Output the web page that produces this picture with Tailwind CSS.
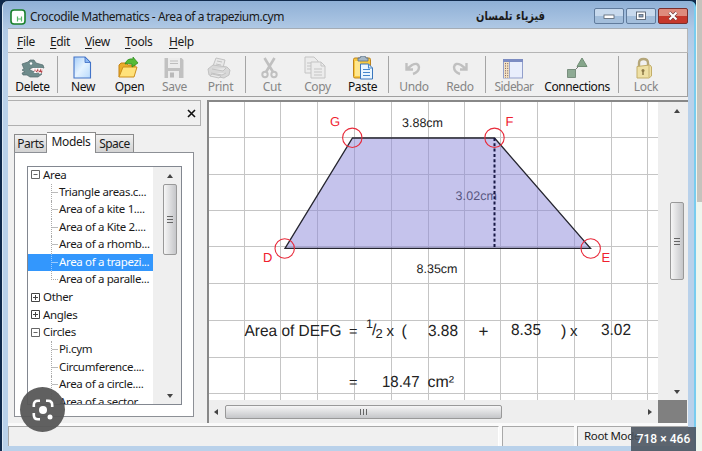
<!DOCTYPE html>
<html lang="en">
<head>
<meta charset="utf-8">
<title>Crocodile Mathematics</title>
<script src="https://cdn.jsdelivr.net/npm/@tailwindcss/browser@4"></script>
</head>
<body class="w-[702px] h-[451px] overflow-hidden bg-[#102a4c] font-['Noto_Sans','Open_Sans',sans-serif] text-[12px] text-[#1a1a1a] tracking-[-0.35px] whitespace-nowrap">
<div class="relative flex w-[702px] h-[451px]">
  <!-- window frame -->
  <div class="flex flex-col ml-[2px] w-[694px] mt-px rounded-t-[6px] bg-[linear-gradient(to_bottom,#8fb0d6_0px,#b0c9e5_28px,#b9d1ea_60px,#b9d1ea_100%)] border-l border-[#dce9f6] border-r-2 border-r-[#78ccef] pl-[5px] pr-[6px] h-[451px]">
    <!-- title bar -->
    <header class="flex h-[27px] shrink-0 items-center pl-[2px] pt-[4px]">
      <svg width="16" height="16" viewBox="0 0 16 16" class="shrink-0"><rect x="1" y="1" width="14" height="14" rx="3" fill="#fff" stroke="#19802b" stroke-width="1.6"/><path d="M7.500 12.500V7.500M11.500 12.500V7.500M7.500 10h4" fill="none" stroke="#58b868" stroke-width="1.200"/></svg>
      <h1 class="ml-[4px] w-[448px] tracking-[-0.47px]">Crocodile Mathematics - Area of a trapezium.cym</h1>
      <div class="w-[68px] -mt-[1px] font-['DejaVu_Sans',sans-serif] font-bold text-[12px] leading-[18px] tracking-normal" dir="rtl"><span class="inline-block origin-right scale-x-[0.82]">فيزياء تلمسان</span></div>
      <div class="flex ml-[49px] gap-[2px] -mt-px">
        <div class="flex w-[30px] h-[16px] items-center justify-center rounded-[2px] border border-[#607b9c] bg-linear-to-b from-[#c7d9ed] from-50% to-[#a3bedb] to-50%"><svg width="12" height="8"><rect x="1" y="3" width="10" height="3.500" fill="#fff" stroke="#55606e" stroke-width=".8"/></svg></div>
        <div class="flex w-[30px] h-[16px] items-center justify-center rounded-[2px] border border-[#607b9c] bg-linear-to-b from-[#c7d9ed] from-50% to-[#a3bedb] to-50%"><svg width="12" height="10"><rect x="1.500" y="1" width="9" height="7.500" fill="#fff" stroke="#55606e" stroke-width=".9"/><rect x="4" y="3.500" width="4" height="2.500" fill="#8ba3bf" stroke="#55606e" stroke-width=".8"/></svg></div>
        <div class="flex w-[30px] h-[16px] items-center justify-center rounded-[2px] border border-[#7a2e2c] bg-linear-to-b from-[#df8a7c] from-50% to-[#c6372b] to-50%"><svg width="12" height="10"><path d="M2.500 1.500l7 7M9.500 1.500l-7 7" stroke="#6c3a3a" stroke-width="3.400"/><path d="M2.500 1.500l7 7M9.500 1.500l-7 7" stroke="#fff" stroke-width="2.200"/></svg></div>
      </div>
    </header>
    <!-- client area -->
    <div class="flex flex-col w-[680px] h-[418px] bg-[#f0f0f0] border-t border-[#a4acb5]">
      <nav class="flex h-[24px] shrink-0 items-center border-r border-b border-[#b5b5b5] pl-[9px] pt-[2px]">
        <span class="w-[33px]"><u class="underline-offset-2">F</u>ile</span>
        <span class="w-[35px]"><u class="underline-offset-2">E</u>dit</span>
        <span class="w-[40px]"><u class="underline-offset-2">V</u>iew</span>
        <span class="w-[44px]"><u class="underline-offset-2">T</u>ools</span>
        <span><u class="underline-offset-2">H</u>elp</span>
      </nav>
      <!-- toolbar -->
      <div class="flex h-[44px] shrink-0 border-r border-b border-[#a0a0a0] text-[#858585]">
        <div class="flex flex-col items-center w-[49px] pt-[4px] text-[#111]"><svg width="24" height="22" viewBox="0 0 24 22" class="shrink-0"><path d="M1 7l6-2 2-2 4 0 2 3 7 2 1 3-7 1-5-1-3 1 3 2 8 2 2 1-4 3-8 0-3-2-4 0-1-2 3-1-3-2 2-1z" fill="#6f8c8c" stroke="#50696b" stroke-width=".7"/><path d="M11 11l11 0-1 5-7-1z" fill="#b9474c"/><path d="M11 11l2 3 1-3 1 3 2-3 1 3 2-3 1 3 1-3M13 16l1-2 2 2 1-2 2 3 1-2" fill="#fff" stroke="#fff" stroke-width=".5"/><circle cx="10" cy="6.500" r="1.200" fill="#fff"/></svg><span class="leading-[14px] mt-px">Delete</span></div>
        <i class="w-px my-[3px] bg-[#a5a5a5]"></i>
        <div class="flex flex-col items-center w-[50px] pt-[4px] text-[#111]"><svg width="20" height="24" viewBox="0 0 20 24" class="shrink-0 -mt-px"><defs><linearGradient id="pg" x2="1" y2="1"><stop stop-color="#a6cdf9"/><stop offset=".5" stop-color="#e5f3ff"/><stop offset="1" stop-color="#b8dafc"/></linearGradient></defs><path d="M1 1h11l5.500 5.500V22H1z" fill="url(#pg)" stroke="#4374c8" stroke-width="1.100"/><path d="M12 1v5.500h5.500z" fill="#8bb8f4" stroke="#3c6cc4" stroke-width=".8"/></svg><span class="leading-[14px]">New</span></div>
        <div class="flex flex-col items-center w-[43px] pt-[4px] text-[#111]"><svg width="24" height="22" viewBox="0 0 24 22" class="shrink-0 -ml-[4px]"><path d="M3 20V8l2-2h5l2 2h7v3" fill="#e9ad2a" stroke="#c58112"/><path d="M3 20l4-10h14l-3 10z" fill="#ffe27a" stroke="#cc8e1b"/><path d="M9 7Q11 1 17 2V0l5 6-6 4V7q-4-1-7 0z" fill="#55bb37" stroke="#258619" stroke-width=".7"/></svg><span class="leading-[14px] mt-px">Open</span></div>
        <div class="flex flex-col items-center w-[47px] pt-[4px]"><svg width="22" height="22" viewBox="0 0 22 22" class="shrink-0 -ml-[2px]"><path d="M1.500 1h17l2 2v18h-19z" fill="#c1c1c1"/><path d="M5 1h12v10H5zM5 14h11v7H5z" fill="#ececec"/><path d="M7 4h8M7 6.500h8" stroke="#bdbdbd"/><path d="M7 15.500h4v5H7z" fill="#bababa"/></svg><span class="leading-[14px] mt-px">Save</span></div>
        <div class="flex flex-col items-center w-[45px] pt-[4px]"><svg width="24" height="22" viewBox="0 0 24 22" class="shrink-0 -ml-[3px]"><g fill="#e8e8e8" stroke="#c2c2c2"><path d="M6 9l3-8 9 2-2 8z"/><path d="M1 12l5-4 14 2 3 3-1 5-5 3-15-3z" fill="#d8d8d8"/><path d="M5 12l11 2 3-3M4 16l11 2 4-2M10 4l5 1M9 7l5 1"/><path d="M5 17l9 2-2 2-9-2z"/></g></svg><span class="leading-[14px] mt-px">Print</span></div>
        <i class="ml-[2px] w-px my-[3px] bg-[#a5a5a5]"></i>
        <div class="flex flex-col items-center w-[52px] pt-[4px]"><svg width="20" height="22" viewBox="0 0 20 22" class="shrink-0 -ml-[4px]"><g fill="none" stroke="#c0c0c0" stroke-width="2.600"><path d="M4.500 1l8.500 14M14.500 1L6 15"/><circle cx="5" cy="17.500" r="2.700" stroke-width="2"/><circle cx="14" cy="17.500" r="2.700" stroke-width="2"/></g></svg><span class="leading-[14px] mt-px">Cut</span></div>
        <div class="flex flex-col items-center w-[39px] pt-[4px]"><svg width="24" height="24" viewBox="0 0 24 24" class="shrink-0 -ml-[5px] -mt-px"><g fill="#ececec" stroke="#c4c4c4"><path d="M2 1h9l4 4v12H2z"/><path d="M4 7h7M4 10h7M4 13h7"/><path d="M8 6h10l4 4v12H8z"/><path d="M18 6v4h4M11 13h8M11 16h8M11 19h8" fill="none"/></g></svg><span class="leading-[14px]">Copy</span></div>
        <div class="flex flex-col items-center w-[51px] pt-[4px] text-[#111]"><svg width="22" height="24" viewBox="0 0 22 24" class="shrink-0 -mt-px"><rect x="1.500" y="2" width="17" height="20" rx="1.500" fill="#f8c83f" stroke="#bd831c"/><path d="M3 5h5v15H3z" fill="#ffe68d"/><path d="M6 4V2h2l1-2h4l1 2h2v3H6z" fill="#a7b8c6" stroke="#566d83" stroke-width=".8"/><path d="M8.500 8h8l4 4v11h-12z" fill="#eaf6ff" stroke="#3976bd"/><path d="M16.500 8v4h4M11 13.500h7M11 16.500h7M11 19.500h7" fill="none" stroke="#4587cc" stroke-width="1.100"/></svg><span class="leading-[14px]">Paste</span></div>
        <i class="w-px my-[3px] bg-[#a5a5a5]"></i>
        <div class="flex flex-col items-center w-[50px] pt-[4px]"><svg width="20" height="22" viewBox="0 0 20 22" class="shrink-0 -ml-[3px]"><path d="M3.500 6v6.500H10M4.500 11.500L9 8q6-3 7 2 0 5-6 7" fill="none" stroke="#c0c0c0" stroke-width="2.400"/></svg><span class="leading-[14px] mt-px">Undo</span></div>
        <div class="flex flex-col items-center w-[42px] pt-[4px]"><svg width="20" height="22" viewBox="0 0 20 22" class="shrink-0"><path d="M16.500 6v6.500H10M15.500 11.500L11 8Q5 5 4 10q0 5 6 7" fill="none" stroke="#c0c0c0" stroke-width="2.400"/></svg><span class="leading-[14px] mt-px">Redo</span></div>
        <i class="ml-[4px] w-px my-[3px] bg-[#a5a5a5]"></i>
        <div class="flex flex-col items-center w-[56px] pt-[4px] tracking-[-0.55px]"><svg width="22" height="22" viewBox="0 0 22 22" class="shrink-0 -ml-[2px]"><rect x="1.500" y="2.500" width="19" height="18.500" fill="#e9eefc" stroke="#929fcb"/><path d="M1 2h20v3H1z" fill="#7c8cc2"/><path d="M2 5h5v16H2z" fill="#f3e3c4"/><path d="M3.500 6v15M5.700 6v15" stroke="#8d6d67" stroke-dasharray="1.200 1.200"/><path d="M7.500 5v16" stroke="#9aa6ce"/></svg><span class="leading-[14px] mt-px">Sidebar</span></div>
        <div class="flex flex-col items-center w-[70px] pt-[4px] text-[#111] tracking-[-0.42px]"><svg width="24" height="22" viewBox="0 0 24 22" class="shrink-0"><path d="M6 17L17 6" stroke="#777"/><path d="M2.500 12.500h8v8h-8z" fill="#8eaa94" stroke="#798f7e"/><path d="M17 1l5 8.500H12z" fill="#86a68b" stroke="#708d75"/></svg><span class="leading-[14px] mt-px">Connections</span></div>
        <i class="ml-[6px] w-px my-[3px] bg-[#a5a5a5]"></i>
        <div class="flex flex-col items-center w-[54px] pt-[4px]"><svg width="18" height="22" viewBox="0 0 18 22" class="shrink-0 -ml-[4px]"><path d="M4 10V6q0-4 4.500-4T13 6v4" fill="none" stroke="#b4a679" stroke-width="2.400"/><path d="M2 9.500l13-1.500 1.500 2v9L14 21H2z" fill="#eee0a5" stroke="#c3ae69"/><path d="M14 9v11" stroke="#c9b575"/><circle cx="8" cy="13.500" r="1.500" fill="#8d7a48"/><path d="M8 14v4" stroke="#8d7a48" stroke-width="1.500"/></svg><span class="leading-[14px] mt-px">Lock</span></div>
      </div>
      <!-- workspace -->
      <main class="flex h-[326px] shrink-0 pt-[3px]">
        <aside class="w-[199px] h-[323px] shrink-0">
          <div class="flex w-[193px] h-[26px] items-center justify-end border-t border-r border-b border-[#b0b0b0] pr-[4px]"><svg width="9" height="9"><path d="M1 1l7 7M8 1L1 8" stroke="#111" stroke-width="1.600"/></svg></div>
          <div class="flex items-end h-[26px] pl-[6px]">
            <div class="w-[33px] h-[18px] border border-b-0 border-[#8b8b8b] bg-linear-to-b from-[#f0f0f0] to-[#d3d3d3] text-center leading-[17px] tracking-[-0.5px]">Parts</div>
            <div class="relative z-10 w-[49px] h-[21px] -mb-px border border-b-0 border-l-0 border-[#8b8b8b] bg-white text-center leading-[17px]">Models</div>
            <div class="w-[38px] h-[18px] border border-b-0 border-l-0 border-[#8b8b8b] bg-linear-to-b from-[#f0f0f0] to-[#d3d3d3] text-center leading-[17px] tracking-[-0.5px]">Space</div>
          </div>
          <div class="ml-[6px] w-[180px] h-[265px] border border-[#8d9096] bg-white pt-[13px] pl-[12px]">
            <div class="flex w-[155px] h-[239px] border border-[#828790]">
              <div class="w-[125px] h-[237px] overflow-hidden tracking-[-0.35px]">
                <ul class="leading-[16.5px] text-[11.5px] -mt-px">
                  <li class="flex h-[17.500px] items-center pl-[3px] gap-[3px]"><svg width="9" height="9"><path d="M.5.5h8v8h-8zM2.500 4.500h4" fill="#fff" stroke="#666"/></svg>Area</li>
                  <li class="flex h-[17.500px] pl-[23px]"><i class="w-[7px] mr-px border-l border-dotted border-[#aaa] bg-[linear-gradient(#bbb,#bbb)] bg-[length:100%_1px] bg-center bg-no-repeat"></i>Triangle areas.c...</li>
                  <li class="flex h-[17.500px] pl-[23px]"><i class="w-[7px] mr-px border-l border-dotted border-[#aaa] bg-[linear-gradient(#bbb,#bbb)] bg-[length:100%_1px] bg-center bg-no-repeat"></i>Area of a kite 1....</li>
                  <li class="flex h-[17.500px] pl-[23px]"><i class="w-[7px] mr-px border-l border-dotted border-[#aaa] bg-[linear-gradient(#bbb,#bbb)] bg-[length:100%_1px] bg-center bg-no-repeat"></i>Area of a Kite 2....</li>
                  <li class="flex h-[17.500px] pl-[23px]"><i class="w-[7px] mr-px border-l border-dotted border-[#aaa] bg-[linear-gradient(#bbb,#bbb)] bg-[length:100%_1px] bg-center bg-no-repeat"></i>Area of a rhomb...</li>
                  <li class="flex h-[17.500px] pl-[23px] bg-[#3397fd] text-white"><i class="w-[7px] mr-px border-l border-dotted border-[#9bcbff] bg-[linear-gradient(#9bcbff,#9bcbff)] bg-[length:100%_1px] bg-center bg-no-repeat"></i>Area of a trapezi...</li>
                  <li class="flex h-[17.500px] pl-[23px]"><i class="w-[7px] h-[9px] mr-px border-l border-b border-dotted border-[#aaa]"></i>Area of a paralle...</li>
                  <li class="flex h-[17.500px] items-center pl-[3px] gap-[3px]"><svg width="9" height="9"><path d="M.5.5h8v8h-8zM2 4.500h5M4.500 2v5" fill="#fff" stroke="#444"/></svg>Other</li>
                  <li class="flex h-[17.500px] items-center pl-[3px] gap-[3px]"><svg width="9" height="9"><path d="M.5.5h8v8h-8zM2 4.500h5M4.500 2v5" fill="#fff" stroke="#444"/></svg>Angles</li>
                  <li class="flex h-[17.500px] items-center pl-[3px] gap-[3px]"><svg width="9" height="9"><path d="M.5.5h8v8h-8zM2.500 4.500h4" fill="#fff" stroke="#666"/></svg>Circles</li>
                  <li class="flex h-[17.500px] pl-[23px]"><i class="w-[7px] mr-px border-l border-dotted border-[#aaa] bg-[linear-gradient(#bbb,#bbb)] bg-[length:100%_1px] bg-center bg-no-repeat"></i>Pi.cym</li>
                  <li class="flex h-[17.500px] pl-[23px]"><i class="w-[7px] mr-px border-l border-dotted border-[#aaa] bg-[linear-gradient(#bbb,#bbb)] bg-[length:100%_1px] bg-center bg-no-repeat"></i>Circumference....</li>
                  <li class="flex h-[17.500px] pl-[23px]"><i class="w-[7px] mr-px border-l border-dotted border-[#aaa] bg-[linear-gradient(#bbb,#bbb)] bg-[length:100%_1px] bg-center bg-no-repeat"></i>Area of a circle....</li>
                  <li class="flex h-[17.500px] pl-[23px]"><i class="w-[7px] mr-px border-l border-dotted border-[#aaa]"></i>Area of a sector</li>
                </ul>
              </div>
              <div class="flex flex-col items-center w-[28px] bg-[#efefef] pl-[6px] pt-[7px]">
                <svg width="6" height="4"><path d="M0 4l3-4 3 4z" fill="#444"/></svg>
                <div class="mt-[6px] flex flex-col w-[14px] h-[71px] items-center justify-center gap-px rounded-[2px] border border-[#999] bg-linear-to-r from-[#f6f6f6] to-[#c5c6c9]"><i class="w-[6px] h-px bg-[#666]"></i><i class="mt-px w-[6px] h-px bg-[#666]"></i><i class="mt-px w-[6px] h-px bg-[#666]"></i></div>
                <svg width="6" height="4" class="mt-auto mb-[6px]"><path d="M0 0l3 4 3-4z" fill="#444"/></svg>
              </div>
            </div>
          </div>
        </aside>
        <section class="flex flex-col w-[481px] h-[323px] border-l-2 border-[#888]">
          <div class="flex h-[300px] border-t-2 border-[#888]">
            <svg width="449" height="298" viewBox="209 102 449 298" class="shrink-0 bg-white" font-family="'Liberation Sans',Arial,sans-serif" letter-spacing="0" fill="#222" text-rendering="geometricPrecision">
              <path d="M244.500 102v298M280.500 102v298M317.500 102v298M354.500 102v298M391.500 102v298M428.500 102v298M464.500 102v298M500.500 102v298M537.500 102v298M574.500 102v298M611.500 102v298M647.500 102v298M209 137.500h449M209 174.500h449M209 210.500h449M209 246.500h449M209 283.500h449M209 320.500h449M209 357.500h449M209 393.500h449" stroke="#c5c5c5" fill="none"/>
              <text x="455.500" y="200" font-size="12.500" textLength="41.500">3.02cm</text>
              <path d="M352.500 138H494.500L590.500 248.300H285z" fill="#8c87d9" fill-opacity=".5" stroke="#25252f" stroke-width="1.300"/>
              <path d="M494.500 138v110" stroke="#171744" stroke-width="2" stroke-dasharray="3 2.300"/>
              <g fill="none" stroke="#e82a3a" stroke-width="1.100"><circle cx="352.300" cy="137.800" r="9.700"/><circle cx="494.500" cy="137.800" r="9.700"/><circle cx="284.700" cy="248.500" r="9.700"/><circle cx="590.700" cy="248.500" r="9.700"/></g>
              <g fill="#f0202e" font-size="13"><text x="330" y="126">G</text><text x="505.500" y="126">F</text><text x="263" y="262">D</text><text x="601.500" y="262">E</text></g>
              <g font-size="12.500"><text x="402" y="126.500" textLength="41">3.88cm</text><text x="416.500" y="273" textLength="41">8.35cm</text></g>
              <g font-size="16">
                <text x="244.500" y="336" textLength="97" lengthAdjust="spacingAndGlyphs">Area of DEFG</text><text x="349" y="336" font-size="14.500">=</text>
                <text x="366" y="328" font-size="12.500">1</text><text x="372" y="335">/</text><text x="375.500" y="337.500" font-size="13">2</text><text x="386.500" y="335.500" font-size="15">x</text><text x="401.500" y="336">(</text>
                <text x="428" y="335.500" textLength="30" lengthAdjust="spacingAndGlyphs">3.88</text><text x="478.500" y="337" font-size="17">+</text><text x="511" y="334.500" textLength="30" lengthAdjust="spacingAndGlyphs">8.35</text><text x="561" y="336">)</text><text x="570" y="335.500" font-size="15">x</text><text x="601" y="334.500" textLength="30" lengthAdjust="spacingAndGlyphs">3.02</text>
                <text x="349" y="387" font-size="14.500">=</text><text x="382" y="386.500" textLength="37.500" lengthAdjust="spacingAndGlyphs">18.47</text><text x="427.500" y="386.500" textLength="26.500" lengthAdjust="spacingAndGlyphs">cm²</text>
              </g>
            </svg>
            <div class="flex flex-col items-center w-[30px] bg-[#eeeeee] pl-[7px] pt-[7px]">
              <svg width="6" height="4"><path d="M0 4l3-4 3 4z" fill="#444"/></svg>
              <div class="mt-[89px] flex flex-col w-[14px] h-[78px] items-center justify-center rounded-[2px] border border-[#999] bg-linear-to-r from-[#f6f6f6] to-[#c5c6c9]"><i class="w-[6px] h-px bg-[#666]"></i><i class="mt-[2px] w-[6px] h-px bg-[#666]"></i><i class="mt-[2px] w-[6px] h-px bg-[#666]"></i></div>
              <svg width="6" height="4" class="mt-auto mb-[6px]"><path d="M0 0l3 4 3-4z" fill="#444"/></svg>
            </div>
          </div>
          <div class="flex h-[23px]">
            <div class="flex w-[449px] items-center bg-[#eeeeee] pl-[5px]">
              <svg width="4" height="6"><path d="M4 0L0 3l4 3z" fill="#444"/></svg>
              <div class="ml-[7px] flex w-[277px] h-[14px] items-center justify-center gap-[2px] rounded-[2px] border border-[#999] bg-linear-to-b from-[#f6f6f6] to-[#c5c6c9]"><i class="w-px h-[6px] bg-[#666]"></i><i class="w-px h-[6px] bg-[#666]"></i><i class="w-px h-[6px] bg-[#666]"></i></div>
              <svg width="4" height="6" class="ml-auto mr-[6px]"><path d="M0 0l4 3-4 3z" fill="#444"/></svg>
            </div>
            <div class="w-[29px] bg-[#808080]"></div>
          </div>
        </section>
      </main>
      <!-- status bar -->
      <footer class="flex gap-[3px] h-[23px] pt-[3px] bg-[#fafafa]">
        <div class="w-[491px] border-t border-l border-r border-[#a8a8a8] border-r-white bg-[#f0f0f0]"></div>
        <div class="w-[72px] border-t border-l border-[#a8a8a8] bg-[#f0f0f0]"></div>
        <div class="w-[111px] border-t border-l border-[#a8a8a8] bg-[#f0f0f0] pl-[6px] leading-[18px] text-[11.5px]">Root Mode</div>
      </footer>
    </div>
  </div>
  <!-- page edge -->
  <div class="flex flex-col w-[6px] pl-[1px] bg-[#eef5ee]"><div class="h-[202px] bg-[#c5c3bd]"></div><div class="flex-1 bg-[#eef6ee]"></div></div>
  <!-- image overlays -->
  <button class="absolute left-[20px] top-[387px] flex w-[45px] h-[45px] items-center justify-center rounded-full bg-[#575757]/95"><svg width="22" height="22" viewBox="0 0 22 22" fill="none" stroke="#fff" stroke-width="2.600"><path d="M1.800 8V6q0-4.200 4.200-4.200h2M14 1.800h2q4.200 0 4.200 4.200v2M1.800 14v2q0 4.200 4.200 4.200h2"/><circle cx="11" cy="11" r="4" fill="#fff" stroke="none"/><circle cx="18" cy="18" r="2.500" fill="#fff" stroke="none"/></svg></button>
  <div class="absolute left-[631px] top-[427px] flex w-[65px] h-[24px] items-center justify-center bg-[#4c5560]/90 font-[Roboto,sans-serif] font-medium text-[12px] tracking-[0.05px] text-white">718 × 466</div>
</div>
</body>
</html>
